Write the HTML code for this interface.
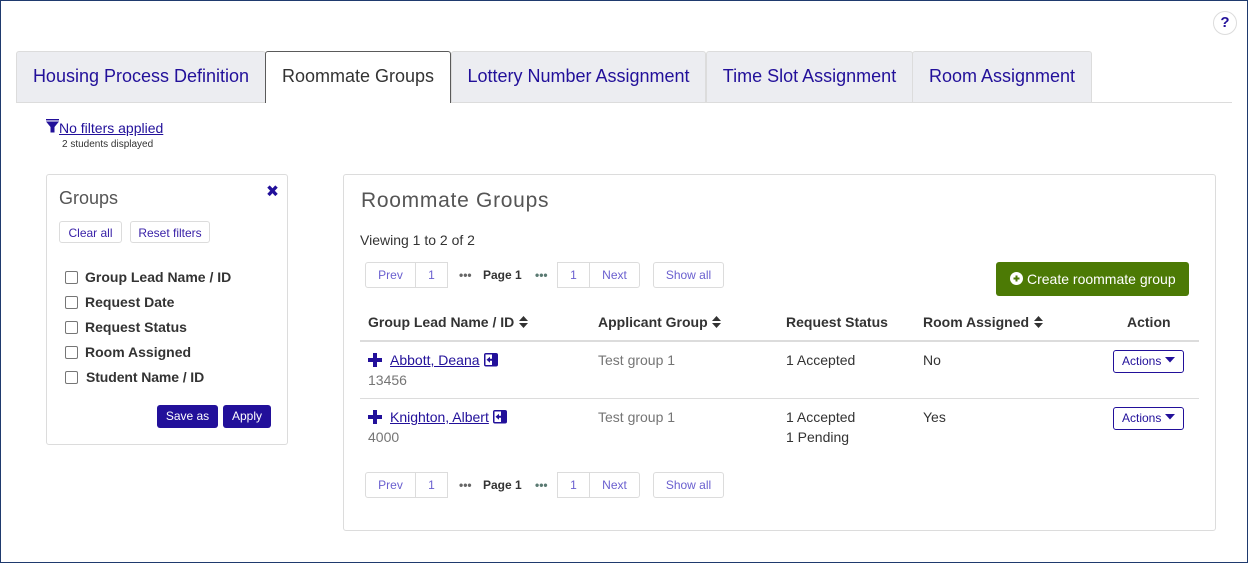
<!DOCTYPE html>
<html><head><meta charset="utf-8"><style>
html,body{margin:0;padding:0;background:#fff}
#p{position:relative;width:1248px;height:563px;overflow:hidden;background:#fff;font-family:"Liberation Sans",sans-serif;color:#333;font-size:14px}
#p *{box-sizing:border-box}
.a{position:absolute;white-space:nowrap}
.fr{position:absolute;left:0;top:0;width:1248px;height:563px;border:1px solid #1f3a6e;pointer-events:none}
.tab{position:absolute;top:51px;height:51px;background:#ecedf1;border:1px solid #dcdcdc;border-bottom:none;border-radius:3px 3px 0 0;font-size:18px;line-height:49px;text-align:center;color:#22109a;white-space:nowrap}
.tab.on{background:#fff;border-color:#5a5a5a;color:#333;z-index:2;height:52px}
.box{position:absolute;border:1px solid #dcdcdc;border-radius:3px;background:#fff}
.btn{position:absolute;border:1px solid #dcdcdc;border-radius:3px;background:#fff;color:#3a22a8;font-size:12px;text-align:center;white-space:nowrap}
.pg{position:absolute;height:26px;border:1px solid #dcdcdc;background:#fff;color:#6a5fcf;font-size:12px;line-height:24px;text-align:center}
.cb{position:absolute;left:65px;width:13px;height:13px;border:1px solid #767676;border-radius:2px;background:#fff}
.lb{position:absolute;left:85px;font-weight:bold;font-size:14px;line-height:16px;color:#333;white-space:nowrap}
.dark{position:absolute;background:#22109a;color:#fff;border-radius:3px;font-size:12px;text-align:center;top:405px;height:23px;line-height:23px}
.th{position:absolute;top:314px;font-weight:bold;font-size:14px;line-height:16px;color:#333;white-space:nowrap}
.td{position:absolute;font-size:14px;line-height:16px;color:#333;white-space:nowrap}
.gr{color:#757575}
.lk{color:#22109a;text-decoration:underline}
.act{position:absolute;left:1113px;width:71px;height:23px;border:1px solid #22109a;border-radius:3px;color:#22109a;font-size:12px;line-height:20px;background:#fff;padding-left:8px;white-space:nowrap}
.dots{position:absolute;font-size:12px;font-weight:bold;line-height:12px}
svg{position:absolute;display:block}
</style></head><body><div id="p">

<div class="a" style="left:1213px;top:11px;width:24px;height:24px;border:1px solid #dcdcdc;border-radius:50%;text-align:center;font-weight:bold;font-size:15px;line-height:22px;color:#22109a">?</div>

<div class="a" style="left:16px;top:102px;width:1216px;height:1px;background:#dcdcdc"></div>
<div class="tab" style="left:16px;width:250px">Housing Process Definition</div>
<div class="tab on" style="left:265px;width:186px">Roommate Groups</div>
<div class="tab" style="left:451px;width:255px">Lottery Number Assignment</div>
<div class="tab" style="left:706px;width:207px">Time Slot Assignment</div>
<div class="tab" style="left:912px;width:180px">Room Assignment</div>

<svg style="left:46px;top:119px" width="13" height="14" viewBox="0 0 13 14"><rect x="0" y="0" width="13" height="1.4" fill="#22109a"/><path d="M0 2.5H13L8.5 8V13.5H4.5V8Z" fill="#22109a"/></svg>
<div class="a lk" style="left:59px;top:120px;font-size:14px;line-height:16px">No filters applied</div>
<div class="a" style="left:62px;top:139px;font-size:10px;line-height:12px;color:#333">2 students displayed</div>

<div class="box" style="left:46px;top:174px;width:242px;height:271px"></div>
<div class="a" style="left:59px;top:188px;font-size:18px;line-height:20px;color:#555">Groups</div>
<svg style="left:266px;top:184px" width="13" height="14" viewBox="0 0 13 14"><path d="M2.5 2.5L10.5 11M10.5 2.5L2.5 11" stroke="#22109a" stroke-width="3.4" fill="none"/></svg>
<div class="btn" style="left:59px;top:221px;width:63px;height:22px;line-height:22px">Clear all</div>
<div class="btn" style="left:130px;top:221px;width:80px;height:22px;line-height:22px">Reset filters</div>

<div class="cb" style="top:271px"></div><div class="lb" style="top:269px">Group Lead Name / ID</div>
<div class="cb" style="top:296px"></div><div class="lb" style="top:294px">Request Date</div>
<div class="cb" style="top:321px"></div><div class="lb" style="top:319px">Request Status</div>
<div class="cb" style="top:346px"></div><div class="lb" style="top:344px">Room Assigned</div>
<div class="cb" style="top:371px"></div><div class="lb" style="top:369px;left:86px;letter-spacing:-.1px">Student Name / ID</div>
<div class="dark" style="left:157px;width:61px">Save as</div>
<div class="dark" style="left:223px;width:48px">Apply</div>

<div class="box" style="left:343px;top:174px;width:873px;height:357px"></div>
<div class="a" style="left:361px;top:189px;font-size:21px;line-height:24px;color:#555;letter-spacing:.72px">Roommate Groups</div>
<div class="a" style="left:360px;top:232px;line-height:16px;font-size:14px">Viewing 1 to 2 of 2</div>

<div class="pg" style="left:365px;top:262px;width:51px;border-radius:3px 0 0 3px">Prev</div>
<div class="pg" style="left:415px;top:262px;width:33px">1</div>
<div class="dots" style="left:459px;top:269px;color:#666">&#8226;&#8226;&#8226;</div>
<div class="a" style="left:483px;top:268px;font-size:12px;font-weight:bold;line-height:14px">Page 1</div>
<div class="dots" style="left:535px;top:269px;color:#5a7a72">&#8226;&#8226;&#8226;</div>
<div class="pg" style="left:557px;top:262px;width:33px">1</div>
<div class="pg" style="left:589px;top:262px;width:51px;border-radius:0 3px 3px 0">Next</div>
<div class="pg" style="left:653px;top:262px;width:71px;border-radius:3px">Show all</div>

<div class="a" style="left:996px;top:262px;width:193px;height:34px;background:#4c7a05;border-radius:3px"></div>
<svg style="left:1010px;top:272px" width="13" height="13" viewBox="0 0 13 13"><circle cx="6.5" cy="6.5" r="6.5" fill="#fff"/><path d="M6.5 3.5V9.5M3.5 6.5H9.5" stroke="#4c7a05" stroke-width="2"/></svg>
<div class="a" style="left:1027px;top:271px;font-size:14px;line-height:16px;color:#fff">Create roommate group</div>

<div class="th" style="left:368px">Group Lead Name / ID</div>
<svg style="left:519px;top:316px" width="9" height="12" viewBox="0 0 9 12"><path d="M4.5 0L9 5H0ZM0 7H9L4.5 12Z" fill="#333"/></svg>
<div class="th" style="left:598px">Applicant Group</div>
<svg style="left:712px;top:316px" width="9" height="12" viewBox="0 0 9 12"><path d="M4.5 0L9 5H0ZM0 7H9L4.5 12Z" fill="#333"/></svg>
<div class="th" style="left:786px">Request Status</div>
<div class="th" style="left:923px">Room Assigned</div>
<svg style="left:1034px;top:316px" width="9" height="12" viewBox="0 0 9 12"><path d="M4.5 0L9 5H0ZM0 7H9L4.5 12Z" fill="#333"/></svg>
<div class="th" style="left:1127px">Action</div>

<div class="a" style="left:360px;top:340px;width:839px;height:2px;background:#dcdcdc"></div>
<div class="a" style="left:360px;top:398px;width:839px;height:1px;background:#dcdcdc"></div>

<svg style="left:368px;top:353px" width="14" height="14" viewBox="0 0 14 14"><path d="M5 0H9V5H14V9H9V14H5V9H0V5H5Z" fill="#22109a"/></svg>
<div class="td lk" style="left:390px;top:352px">Abbott, Deana</div>
<svg style="left:484px;top:353px" width="14" height="14" viewBox="0 0 14 14"><rect x="0" y="0" width="14" height="13.5" rx="2" fill="#22109a"/><rect x="1.5" y="1.5" width="6.5" height="10.5" fill="#fff"/><path d="M2.5 6.7L6 3.7V5.7H10V7.7H6V9.7Z" fill="#22109a"/></svg>
<div class="td gr" style="left:368px;top:372px">13456</div>
<div class="td gr" style="left:598px;top:352px">Test group 1</div>
<div class="td" style="left:786px;top:352px">1 Accepted</div>
<div class="td" style="left:923px;top:352px">No</div>
<div class="act" style="top:350px">Actions</div>
<svg style="left:1165px;top:357px" width="10" height="6" viewBox="0 0 10 6"><path d="M0 0H10L5 5.5Z" fill="#22109a"/></svg>

<svg style="left:368px;top:410px" width="14" height="14" viewBox="0 0 14 14"><path d="M5 0H9V5H14V9H9V14H5V9H0V5H5Z" fill="#22109a"/></svg>
<div class="td lk" style="left:390px;top:409px">Knighton, Albert</div>
<svg style="left:493px;top:410px" width="14" height="14" viewBox="0 0 14 14"><rect x="0" y="0" width="14" height="13.5" rx="2" fill="#22109a"/><rect x="1.5" y="1.5" width="6.5" height="10.5" fill="#fff"/><path d="M2.5 6.7L6 3.7V5.7H10V7.7H6V9.7Z" fill="#22109a"/></svg>
<div class="td gr" style="left:368px;top:429px">4000</div>
<div class="td gr" style="left:598px;top:409px">Test group 1</div>
<div class="td" style="left:786px;top:409px">1 Accepted</div>
<div class="td" style="left:786px;top:429px">1 Pending</div>
<div class="td" style="left:923px;top:409px">Yes</div>
<div class="act" style="top:407px">Actions</div>
<svg style="left:1165px;top:414px" width="10" height="6" viewBox="0 0 10 6"><path d="M0 0H10L5 5.5Z" fill="#22109a"/></svg>

<div class="pg" style="left:365px;top:472px;width:51px;border-radius:3px 0 0 3px">Prev</div>
<div class="pg" style="left:415px;top:472px;width:33px">1</div>
<div class="dots" style="left:459px;top:479px;color:#666">&#8226;&#8226;&#8226;</div>
<div class="a" style="left:483px;top:478px;font-size:12px;font-weight:bold;line-height:14px">Page 1</div>
<div class="dots" style="left:535px;top:479px;color:#5a7a72">&#8226;&#8226;&#8226;</div>
<div class="pg" style="left:557px;top:472px;width:33px">1</div>
<div class="pg" style="left:589px;top:472px;width:51px;border-radius:0 3px 3px 0">Next</div>
<div class="pg" style="left:653px;top:472px;width:71px;border-radius:3px">Show all</div>

<div class="fr"></div>
</div></body></html>
